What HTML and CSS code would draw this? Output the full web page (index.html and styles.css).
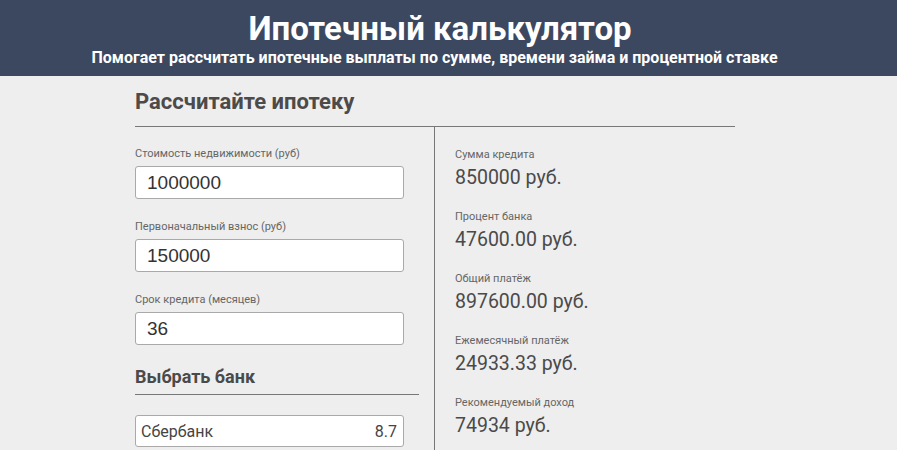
FILE: index.html
```html
<!DOCTYPE html>
<html lang="ru">
<head>
<meta charset="utf-8">
<title>Ипотечный калькулятор</title>
<link rel="stylesheet" href="styles.css">
</head>
<body>
<header class="hero">
  <h1 class="hero-title">Ипотечный калькулятор</h1>
  <p class="hero-sub">Помогает рассчитать ипотечные выплаты по сумме, времени займа и процентной ставке</p>
</header>
<main class="page">
  <section class="calc">
    <h2 class="calc-title">Рассчитайте ипотеку</h2>
    <div class="cols">
      <div class="col-left">
        <div class="field">
          <label class="field-label">Стоимость недвижимости (руб)</label>
          <div class="input">1000000</div>
        </div>
        <div class="field">
          <label class="field-label">Первоначальный взнос (руб)</label>
          <div class="input">150000</div>
        </div>
        <div class="field">
          <label class="field-label">Срок кредита (месяцев)</label>
          <div class="input">36</div>
        </div>
        <h3 class="bank-title">Выбрать банк</h3>
        <div class="bank">
          <span>Сбербанк</span>
          <span>8.7</span>
        </div>
      </div>
      <div class="col-right">
        <div class="result">
          <div class="result-label">Сумма кредита</div>
          <div class="result-value">850000 руб.</div>
        </div>
        <div class="result">
          <div class="result-label">Процент банка</div>
          <div class="result-value">47600.00 руб.</div>
        </div>
        <div class="result">
          <div class="result-label">Общий платёж</div>
          <div class="result-value">897600.00 руб.</div>
        </div>
        <div class="result">
          <div class="result-label">Ежемесячный платёж</div>
          <div class="result-value">24933.33 руб.</div>
        </div>
        <div class="result">
          <div class="result-label">Рекомендуемый доход</div>
          <div class="result-value">74934 руб.</div>
        </div>
      </div>
    </div>
  </section>
</main>
</body>
</html>
```
FILE: styles.css
```css
* { box-sizing: border-box; }
html, body { margin: 0; padding: 0; }
body {
  background: #eeeeee;
  font-family: Roboto, "Noto Sans", sans-serif;
  color: #4a4a4a;
  overflow: hidden;
  height: 450px;
}
.hero {
  background: #3c4860;
  color: #fff;
  text-align: center;
  height: 76px;
  padding-top: 9px;
  padding-right: 17px;
}
.hero-title {
  margin: 0;
  font-size: 33px;
  line-height: 40px;
  font-weight: 700;
}
.hero-sub {
  margin: 0;
  font-size: 16px;
  line-height: 17px;
  font-weight: 700;
  padding-right: 11px;
}
.page {
  padding-right: 17px;
}
.calc {
  width: 610px;
  margin: 0 auto;
  padding-right: 10px;
}
.calc-title {
  margin: 0;
  font-size: 22px;
  font-weight: 700;
  line-height: 28px;
  padding-top: 12px;
  padding-bottom: 10px;
  border-bottom: 1px solid #777;
  color: #4d4a4a;
}
.cols {
  display: flex;
}
.col-left {
  width: 300px;
  border-right: 1px solid #777;
  padding-top: 20px;
  padding-right: 15px;
  height: 330px;
}
.field { margin-bottom: 21px; }
.field-label {
  display: block;
  font-size: 11px;
  line-height: 13px;
  color: #666;
  margin-bottom: 6px;
}
.input {
  width: 269px;
  height: 33px;
  background: #fff;
  border: 1px solid #a9a9a9;
  border-radius: 3px;
  font-family: "Liberation Sans", Arial, sans-serif;
  font-size: 19px;
  line-height: 31px;
  padding-left: 11px;
  color: #333;
}
.bank-title {
  margin: 0;
  font-size: 18px;
  font-weight: 700;
  line-height: 22px;
  padding-bottom: 6px;
  border-bottom: 1px solid #777;
  color: #4a4a4a;
  margin-top: 1px;
}
.bank {
  margin-top: 20px;
  width: 269px;
  height: 32px;
  background: #fff;
  border: 1px solid #a9a9a9;
  border-radius: 3px;
  display: flex;
  justify-content: space-between;
  align-items: center;
  padding: 0 6px 0 5px;
  font-size: 16px;
  color: #444;
}
.col-right {
  padding-left: 20px;
  padding-top: 21px;
}
.result { margin-bottom: 18px; }
.result-label {
  font-size: 11px;
  line-height: 14px;
  color: #666;
  margin-bottom: 2px;
}
.result-value {
  font-size: 19.5px;
  line-height: 28px;
  color: #4a4a4a;
}
```
